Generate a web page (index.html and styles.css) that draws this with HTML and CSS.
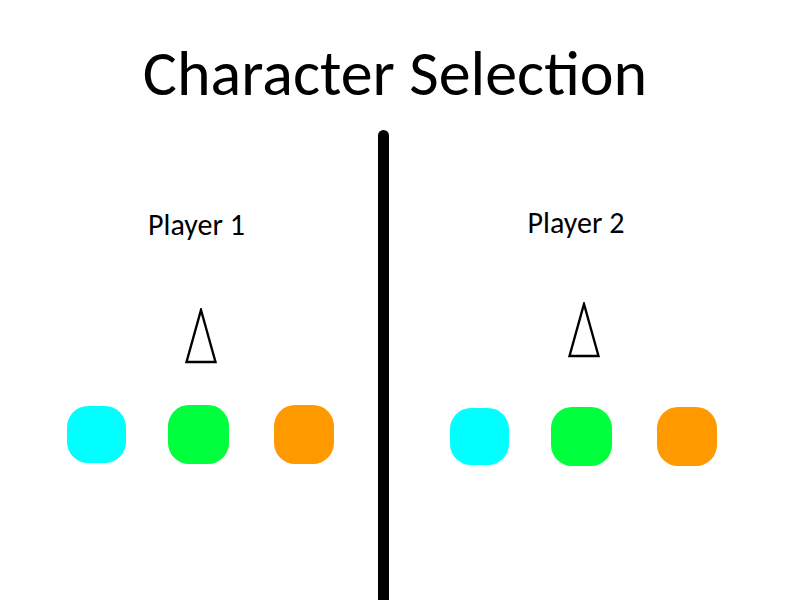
FILE: index.html
```html
<!DOCTYPE html>
<html lang="en">
<head>
<meta charset="utf-8">
<title>Character Selection</title>
<link rel="stylesheet" href="styles.css">
</head>
<body>
<div class="page">
  <h1 class="title">Character Selection</h1>
  <div class="arena">
    <section class="panel panel-left">
      <div class="column">
        <div class="label label-1">Player 1</div>
        <svg class="pointer pointer-1" width="32" height="56" viewBox="0 0 32 56">
          <polygon points="16,2 30.5,54 1.5,54" fill="#fff" stroke="#000" stroke-width="2.4"/>
        </svg>
        <div class="swatches swatches-1">
          <div class="swatch cyan"></div>
          <div class="swatch green"></div>
          <div class="swatch orange"></div>
        </div>
      </div>
    </section>
    <div class="divider"></div>
    <section class="panel panel-right">
      <div class="column">
        <div class="label label-2">Player 2</div>
        <svg class="pointer pointer-2" width="32" height="56" viewBox="0 0 32 56">
          <polygon points="16,2 30.5,54 1.5,54" fill="#fff" stroke="#000" stroke-width="2.4"/>
        </svg>
        <div class="swatches swatches-2">
          <div class="swatch cyan"></div>
          <div class="swatch green"></div>
          <div class="swatch orange"></div>
        </div>
      </div>
    </section>
  </div>
</div>
</body>
</html>
```
FILE: styles.css
```css
html, body {
  margin: 0;
  padding: 0;
  background: #fff;
}
.page {
  width: 800px;
  height: 600px;
  overflow: hidden;
  font-family: "Carlito", "Lato", sans-serif;
  color: #000;
}
.title {
  margin: 0;
  height: 130px;
  box-sizing: border-box;
  padding: 40px 10px 0 0;
  font-size: 64px;
  font-weight: normal;
  line-height: 66px;
  text-align: center;
}
.arena {
  display: flex;
  height: 470px;
}
.panel-left {
  width: 378px;
}
.divider {
  width: 11px;
  background: #000;
  border-radius: 5.5px 5.5px 0 0;
}
.panel-right {
  flex: 1;
}
.column {
  width: 267px;
  display: flex;
  flex-direction: column;
  align-items: center;
}
.panel-left .column {
  margin-left: 67px;
}
.panel-right .column {
  margin-left: 61px;
}
.label {
  font-size: 30px;
  line-height: 30px;
  height: 30px;
}
.label-1 {
  margin-top: 80px;
  margin-right: 8px;
}
.label-2 {
  margin-top: 78px;
  margin-right: 15px;
}
.pointer {
  display: block;
}
.pointer-1 {
  margin-top: 68px;
}
.pointer-2 {
  margin-top: 64px;
}
.swatches {
  display: flex;
  align-items: flex-start;
  width: 267px;
}
.swatches-1 {
  margin-top: 41px;
}
.swatches-2 {
  margin-top: 49px;
}
.swatch {
  width: 61px;
  height: 59px;
  border-radius: 21px;
}
.swatch + .swatch {
  margin-left: 42px;
}
.cyan {
  width: 60px;
  height: 57px;
  margin-top: 1px;
  background: #00ffff;
}
.green {
  background: #00ff3c;
}
.orange {
  background: #ff9900;
}
.swatch.orange {
  margin-left: 45px;
}
```
